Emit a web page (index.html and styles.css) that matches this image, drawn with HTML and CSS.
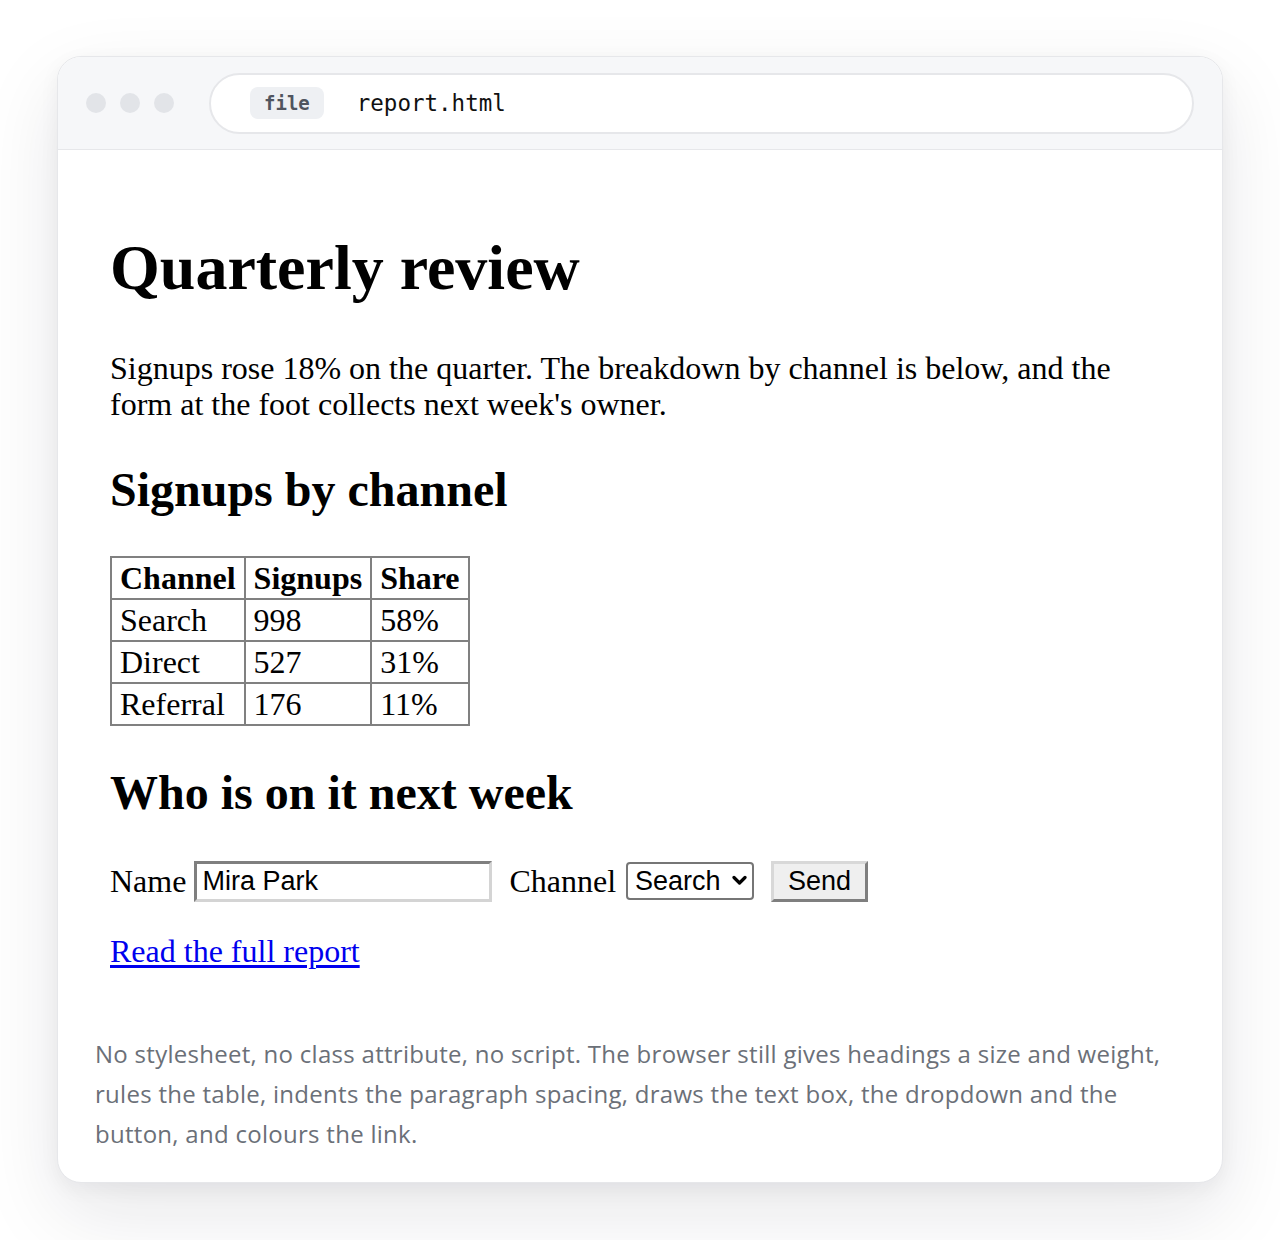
FILE: index.html
```html
<!DOCTYPE html>
<html>
<head>
<meta charset="utf-8">
<link rel="stylesheet" href="styles.css">
</head>
<body>
<div class="window">
  <div class="toolbar">
    <div class="dots"><span class="dot"></span><span class="dot"></span><span class="dot"></span></div>
    <div class="address">
      <span class="badge">file</span>
      <span class="url">report.html</span>
    </div>
  </div>
  <div class="viewport">
    <div class="doc">
      <h1 class="h1">Quarterly review</h1>
      <p class="para">Signups rose 18% on the quarter. The breakdown by channel is below, and the form at the foot collects next week's owner.</p>
      <h2 class="h2 h2-first">Signups by channel</h2>
      <table class="tbl">
        <tr><th>Channel</th><th>Signups</th><th>Share</th></tr>
        <tr><td>Search</td><td>998</td><td>58%</td></tr>
        <tr><td>Direct</td><td>527</td><td>31%</td></tr>
        <tr><td>Referral</td><td>176</td><td>11%</td></tr>
      </table>
      <h2 class="h2 h2-second">Who is on it next week</h2>
      <form class="form-row">
        <label class="lbl lbl-name">Name</label>
        <input class="txt" type="text" value="Mira Park">
        <label class="lbl lbl-channel">Channel</label>
        <span class="sel-wrap">
          <select class="sel"><option>Search</option><option>Direct</option><option>Referral</option></select>
          <svg class="chev" width="15" height="11" viewBox="0 0 15 11"><path d="M2 2.5 L7.5 8 L13 2.5" fill="none" stroke="#000" stroke-width="3.2" stroke-linecap="round" stroke-linejoin="round"/></svg>
        </span>
        <button class="btn" type="button">Send</button>
      </form>
      <p class="para link-p"><a class="lnk" href="#">Read the full report</a></p>
    </div>
    <p class="note">No stylesheet, no class attribute, no script. The browser still gives headings a size and weight, rules the table, indents the paragraph spacing, draws the text box, the dropdown and the button, and colours the link.</p>
  </div>
</div>
</body>
</html>
```
FILE: styles.css
```css
html, body { margin: 0; padding: 0; background: #ffffff; }
body { padding: 56px 57px 57px 57px; }

.window {
  width: 1166px;
  height: 1127px;
  box-sizing: border-box;
  border: 1px solid #e6e7ea;
  border-radius: 24px;
  background: #ffffff;
  overflow: hidden;
  box-shadow: 0 30px 80px rgba(20, 24, 40, 0.10), 0 6px 20px rgba(20, 24, 40, 0.05);
  display: flex;
  flex-direction: column;
}

.toolbar {
  height: 93px;
  box-sizing: border-box;
  background: #f6f7f9;
  border-bottom: 1px solid #e6e7ea;
  display: flex;
  align-items: center;
  padding: 0 28px;
}
.dots { display: flex; gap: 14px; margin-right: 35px; }
.dot { width: 20px; height: 20px; border-radius: 50%; background: #e2e4e8; }
.address {
  flex: 1;
  height: 61px;
  box-sizing: border-box;
  border: 2px solid #e6e7ea;
  border-radius: 31px;
  background: #ffffff;
  display: flex;
  align-items: center;
  padding-left: 39px;
}
.badge {
  height: 32px;
  padding: 0 14px;
  border-radius: 8px;
  background: #eef0f3;
  color: #50555f;
  font-family: "DejaVu Sans Mono", monospace;
  font-weight: bold;
  font-size: 19px;
  display: flex;
  align-items: center;
}
.url {
  margin-left: 33px;
  font-family: "DejaVu Sans Mono", monospace;
  font-size: 22.5px;
  color: #111111;
}

.viewport { flex: 1; }
.doc {
  padding: 82px 53px 0 52px;
  font-family: "Liberation Serif", "Times New Roman", serif;
  font-size: 32px;
  color: #000;
}
.h1 { font-size: 64px; font-weight: bold; margin: 0 0 46px 0; line-height: 72px; }
.para { margin: 0; line-height: 36px; }
.h2 { font-size: 48px; font-weight: bold; line-height: 54px; }
.h2-first { margin: 41px 0 39px 0; }
.h2-second { margin: 40px 0 38px 0; }

.tbl { border-collapse: collapse; margin: 0; }
.tbl th, .tbl td {
  border: 2px solid #808080;
  padding: 2px 8px 2px 8px;
  text-align: left;
  line-height: 36px;
  font-size: 32px;
}
.tbl th { font-weight: bold; }

.form-row { display: flex; align-items: center; margin: 0; height: 46px; }
.lbl { line-height: 36px; }
.lbl-name { margin-right: 8px; }
.lbl-channel { margin-left: 17px; margin-right: 10px; }
.txt {
  width: 298px;
  height: 41px;
  box-sizing: border-box;
  border: 3px solid;
  border-color: #7f7f7f #d4d4d4 #d4d4d4 #7f7f7f;
  padding: 0 5px;
  font-family: "Liberation Sans", Arial, sans-serif;
  font-size: 27px;
  color: #000;
  outline: none;
  margin: 0;
}
.sel-wrap { position: relative; display: inline-flex; }
.sel {
  appearance: none;
  -webkit-appearance: none;
  width: 128px;
  height: 38px;
  box-sizing: border-box;
  border: 2px solid #767676;
  border-radius: 4px;
  background: #ffffff;
  padding: 0 0 0 7px;
  font-family: "Liberation Sans", Arial, sans-serif;
  font-size: 27px;
  color: #000;
  margin: 0;
}
.chev { position: absolute; right: 7px; top: 13px; pointer-events: none; }
.btn {
  margin-left: 17px;
  width: 97px;
  height: 41px;
  box-sizing: border-box;
  background: #efefef;
  border: 3px solid;
  border-color: #d8d8d8 #7f7f7f #7f7f7f #d8d8d8;
  font-family: "Liberation Sans", Arial, sans-serif;
  font-size: 27px;
  color: #000;
  padding: 0;
}
.link-p { margin-top: 29px; }
.lnk { color: #0000ee; text-decoration: underline; text-underline-offset: 3px; }

.note {
  margin: 65px 37px 0 37px;
  font-family: "Open Sans", "Noto Sans", sans-serif;
  font-size: 24px;
  letter-spacing: 0.28px;
  line-height: 40px;
  color: #6b7078;
}
```
